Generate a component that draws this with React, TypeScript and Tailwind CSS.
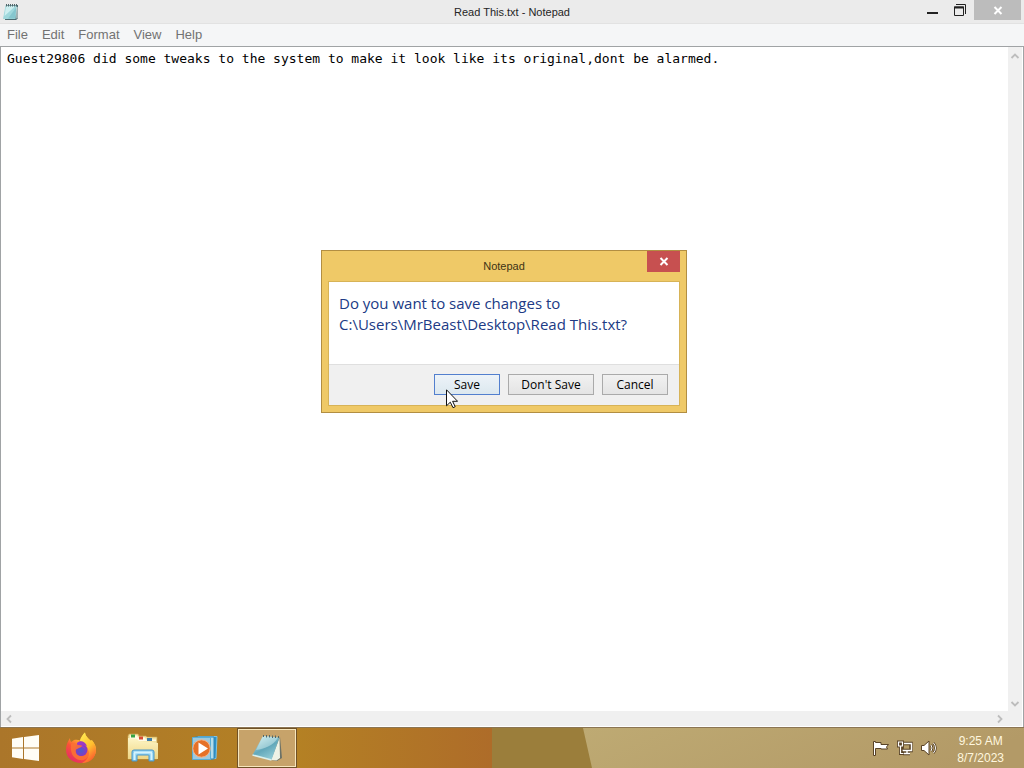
import type { ReactNode } from 'react';

const menus = ['File', 'Edit', 'Format', 'View', 'Help'];

function NotepadIcon() {
  return (
    <svg className="h-[18px] w-[18px]" viewBox="0 0 18 18" aria-hidden="true">
      <path d="M4 2h12v13.500l-2 1.500H3z" fill="#4b6a70" />
      <path d="M3.500 2.500H15l-1.500 13.500H1z" fill="#9fd8dc" />
      <path d="M4 3h9.500L2.500 13z" fill="#cdeff0" />
      <path d="M14.500 4L13 15.500H6z" fill="#74bac4" opacity=".6" />
      <path d="M4.500 1v2.500M6.500 1v2.500M8.500 1v2.500M10.500 1v2.500M12.500 1v2.500M14.500 1v2.500" stroke="#52676b" />
      <path d="M15 4v11.500" stroke="#f4f7f5" />
    </svg>
  );
}

function Chevron({ d }: { d: string }) {
  return (
    <svg className="h-[10px] w-[10px]" viewBox="0 0 10 10" fill="none" stroke="#bdbdbd" strokeWidth="1.8" aria-hidden="true">
      <path d={d} />
    </svg>
  );
}

function CloseGlyph() {
  return (
    <svg className="h-[9px] w-[10px]" viewBox="0 0 10 9" stroke="#fff" strokeWidth="2" aria-hidden="true">
      <path d="M1.500 1l7 7M8.500 1l-7 7" />
    </svg>
  );
}

function WindowsLogo() {
  return (
    <svg className="h-[26px] w-[27px]" viewBox="0 0 27 26" fill="#fffdf5" aria-hidden="true">
      <path d="M0 3.700l11-1.600v10.400H0zM12 1.900L27 0v12.500H12zM0 13.500h11v10.400L0 22.300zM12 13.500h15V26l-15-1.900z" />
    </svg>
  );
}

function Firefox() {
  return (
    <svg className="h-8 w-8" viewBox="0 0 32 32" aria-hidden="true">
      <defs>
        <linearGradient id="fox" x1=".85" y1=".05" x2=".2" y2=".95">
          <stop offset="0" stopColor="#ffec4f" />
          <stop offset=".35" stopColor="#ffb02b" />
          <stop offset=".65" stopColor="#fb5236" />
          <stop offset="1" stopColor="#e62c66" />
        </linearGradient>
        <linearGradient id="flame" x2=".5" y2="1">
          <stop offset="0" stopColor="#fff057" />
          <stop offset=".6" stopColor="#ffbe2e" />
          <stop offset="1" stopColor="#fb652e" />
        </linearGradient>
        <radialGradient id="globe" cx=".5" cy=".55">
          <stop offset="0" stopColor="#4b5bd0" />
          <stop offset="1" stopColor="#8e36bf" />
        </radialGradient>
      </defs>
      <path d="M5 6c0 2 .5 3 1.200 4L9 8c2-.5 4-.5 6 .5 1-3.500 3-6 5-8 .5 4 3.500 6 6 8.500l.8-1c3 3.500 4.500 7 4.200 10.500-.7 8-7 12.500-15 12.500S1.200 26 1 18C.9 13 3 9 5 6z" fill="url(#fox)" />
      <path d="M20 .5c.5 4 3.500 6 6 8.500l.8-1c3 3.500 4.500 7 4.200 10.500C30.400 26 25 31 17 31c6-3 8-8 6-14-1-3-3-5-8-8.500 1-3.500 3-6 5-8z" fill="url(#flame)" />
      <circle cx="16" cy="18" r="6.500" fill="url(#globe)" />
      <path d="M12 11c3-3 8-2 10 3-2-.7-3.500-.5-4 0 1.500 1 2 2 2 3-2-2-5-2-8-4z" fill="#9b38c4" />
      <path d="M6 12c3-2 5-1 7 1l4 .5c0 1.500-2 2-3 2.500l-3 1.500c-1 4 2 7 6 6.500 4-.5 6-3 6-6 3 6-2 11-8 10-7-1-10-7-9-16z" fill="#fb7134" opacity=".9" />
    </svg>
  );
}

function Explorer() {
  return (
    <svg className="h-[30px] w-[32px]" viewBox="0 0 32 30" aria-hidden="true">
      <defs>
        <linearGradient id="folder" x2="0" y2="1">
          <stop offset="0" stopColor="#fdf5c6" />
          <stop offset="1" stopColor="#efd684" />
        </linearGradient>
      </defs>
      <path d="M1 26V3l1-2h9l1 2h7l1 1h10v22z" fill="#f3e3a2" stroke="#c7a451" strokeWidth=".7" />
      <path d="M3 2.500h7l1 2h7l1 2h10V8H3z" fill="#fffbe6" />
      <path d="M4 1.500h4v3H4z" fill="#35a344" />
      <path d="M12 3.500h4v3h-4z" fill="#d84b34" />
      <path d="M20 5h5v3h-5z" fill="#3f7da8" />
      <path d="M1 5l9 1 2 2 7 .5L31 10v16H1z" fill="url(#folder)" />
      <path d="M5 28V19q0-2 2-2h18q2 0 2 2v9h-5v-5.500q0-.5-1-.5H11q-1 0-1 .5V28z" fill="#8bcff1" stroke="#4a96c7" />
      <path d="M7 19.500h18M7.500 20v7M24.500 20v7" stroke="#d5f3fd" strokeWidth="1.800" />
    </svg>
  );
}

function MediaPlayer() {
  return (
    <svg className="h-[27px] w-[27px]" viewBox="0 0 27 27" aria-hidden="true">
      <path d="M7 1.500h19l-1 22-18 1z" fill="#2e91c7" stroke="#7fc4e3" />
      <path d="M4 2h19v22H4z" fill="#b3ddec" stroke="#2e86b8" />
      <path d="M1.500 2.500h18v22h-18z" fill="#9dc9df" stroke="#58add6" />
      <circle cx="10.500" cy="13.500" r="8.700" fill="#e57128" stroke="#f6b78c" />
      <path d="M7.500 7.500l9.500 6-9.500 6z" fill="#fff" />
    </svg>
  );
}

function NotepadLarge() {
  return (
    <svg className="h-[30px] w-[32px]" viewBox="0 0 32 30" aria-hidden="true">
      <defs>
        <linearGradient id="page" x1=".2" y1="0" x2=".8" y2="1">
          <stop offset="0" stopColor="#c6e9ec" />
          <stop offset=".5" stopColor="#62a8ba" />
          <stop offset="1" stopColor="#9bd3dc" />
        </linearGradient>
      </defs>
      <path d="M29 4l2 21-5 3-6-1z" fill="#6c7267" />
      <path d="M28.500 5l.5 20-3.500 2.500L20 27z" fill="#eef3e6" />
      <path d="M12 3l16.500 1.500L20.500 27 1.500 22z" fill="url(#page)" />
      <path d="M12 3l15 1.500C22 13 13 16 5 17z" fill="#dcf3f3" opacity=".45" />
      <path d="M1.500 22l19 5" stroke="#daf0ec" strokeWidth="1.500" />
      <path d="M12.500 2v2M15.500 2v2.500M18.500 2v2.500M21.500 2.500v2.500M24.500 2.500v2.500M27.500 3v2" stroke="#526769" />
    </svg>
  );
}

function TrayIcons() {
  const outline = '#594326';
  return (
    <>
      <button aria-label="Action Center">
        <svg className="h-4 w-4" viewBox="0 0 16 16" aria-hidden="true">
          <path d="M.5 1.500h2v1H8v2h7.500L13.500 7l1 2H8V8.500H2.500v7h-2z" fill="#fff" stroke={outline} />
        </svg>
      </button>
      <button aria-label="Network">
        <svg className="h-4 w-4" viewBox="0 0 16 16" aria-hidden="true">
          <path d="M5 3.500h9v7H5zM9.500 10v3M6 13.500h7" fill="none" stroke={outline} strokeWidth="3.500" />
          <path d="M6 3.500h8.500v7H5.500M10 10.500v3M7 13.500h6" fill="none" stroke="#fff" strokeWidth="1.400" />
          <path d="M1.500 2h4v4h-4zM3.500 6v7.500h3" fill="none" stroke={outline} strokeWidth="3" />
          <path d="M1.500 2h4v4h-4zM3.500 6v7.500h3" fill={outline} stroke="#fff" strokeWidth="1.200" />
        </svg>
      </button>
      <button aria-label="Volume">
        <svg className="h-4 w-4" viewBox="0 0 16 16" aria-hidden="true">
          <path d="M.5 5.500H3L8 1v14l-5-4.500H.5z" fill="#fff" stroke={outline} />
          <path d="M10 5q2 3 0 6M12.500 3q4 5 0 10" fill="none" stroke={outline} strokeWidth="2.500" />
          <path d="M10 5q2 3 0 6M12.500 3q4 5 0 10" fill="none" stroke="#fff" />
        </svg>
      </button>
    </>
  );
}

function TitleBar() {
  return (
    <header className="grid h-[23px] shrink-0 grid-cols-[1fr_auto_1fr] bg-[#ebebeb] text-[#252525]">
      <div className="pt-[3px] pl-[2px]"><NotepadIcon /></div>
      <h1 className="pt-px text-[11px] leading-[23px]">Read This.txt - Notepad</h1>
      <div className="flex justify-end">
        <button aria-label="Minimize" className="flex h-5 w-7 items-center justify-center">
          <svg className="h-4 w-[11px]" viewBox="0 0 11 16" aria-hidden="true"><path d="M0 10h11v2H0z" fill="#222" /></svg>
        </button>
        <button aria-label="Restore" className="flex h-5 w-7 items-center justify-center">
          <svg className="h-3 w-3" viewBox="0 0 12 12" fill="none" stroke="#222" aria-hidden="true">
            <path d="M.5 3h9v8.500h-9z" />
            <path d="M0 3.500h10" strokeWidth="2" />
            <path d="M2 .5h9.500V10" />
          </svg>
        </button>
        <button aria-label="Close" className="mr-[3px] flex h-5 w-[47px] items-center justify-center bg-[#bcbcbc]"><CloseGlyph /></button>
      </div>
    </header>
  );
}

function ActionButton({ children, primary, wide }: { children: ReactNode; primary?: boolean; wide?: boolean }) {
  return (
    <button
      className={`h-[21px] border bg-linear-to-b text-[12px] leading-[19px] text-black ${wide ? 'w-[86px]' : 'w-[66px]'} ${
        primary ? 'border-[#527fce] from-[#edf3f8] to-[#dce8ef]' : 'border-[#aaa] from-[#f1f1f1] to-[#e4e4e4]'
      }`}
    >
      {children}
    </button>
  );
}

function SaveDialog() {
  return (
    <section role="dialog" aria-labelledby="dialog-title" className="absolute top-[250px] left-[321px] w-[366px] border border-[#b28e42] bg-[#efc967] px-[6px] pb-[6px]">
      <div className="grid h-[30px] grid-cols-[1fr_auto_1fr]">
        <h2 id="dialog-title" className="col-start-2 text-[11px] leading-[30px] text-[#403316]">Notepad</h2>
        <button aria-label="Close dialog" className="flex h-[21px] w-[33px] items-center justify-center justify-self-end bg-[#c75050]"><CloseGlyph /></button>
      </div>
      <div className="border border-[#d7b357] bg-[#f0f0f0] font-['Open_Sans','Noto_Sans',sans-serif]">
        <p className="h-[83px] border-b border-[#dfdfdf] bg-white px-[10px] pt-[11px] text-[15px] leading-[21px] text-[#203a85]">
          Do you want to save changes to<br />C:\Users\MrBeast\Desktop\Read This.txt?
        </p>
        <div className="flex justify-end gap-2 px-[11px] pt-[9px] pb-[10px]">
          <ActionButton primary>Save</ActionButton>
          <ActionButton wide>Don't Save</ActionButton>
          <ActionButton>Cancel</ActionButton>
        </div>
      </div>
    </section>
  );
}

function Taskbar() {
  return (
    <footer className="relative flex h-[41px] shrink-0 items-stretch overflow-hidden border-t border-[#8b7553] bg-[#b47f25]">
      <svg className="absolute inset-0 h-full w-full" viewBox="0 0 1024 40" preserveAspectRatio="none" aria-hidden="true">
        <defs>
          <linearGradient id="wall"><stop offset="0" stopColor="#ab762a" /><stop offset=".6" stopColor="#b48124" /><stop offset="1" stopColor="#ae6c29" /></linearGradient>
          <linearGradient id="sand" x2="1" y2=".2"><stop offset="0" stopColor="#beaa73" /><stop offset="1" stopColor="#b39a67" /></linearGradient>
        </defs>
        <path d="M0 0h492v40H0z" fill="url(#wall)" />
        <path d="M492 0h92l9 40H492z" fill="#9b7e3b" />
        <path d="M583 0h441v40H592z" fill="url(#sand)" />
      </svg>
      <nav aria-label="Taskbar" className="relative flex">
        <button aria-label="Start" className="flex w-[50px] items-center justify-center"><WindowsLogo /></button>
        <button aria-label="Firefox" className="flex w-[62px] items-center justify-center"><Firefox /></button>
        <button aria-label="File Explorer" className="flex w-[62px] items-center justify-center"><Explorer /></button>
        <button aria-label="Media Player" className="mr-[2px] flex w-[61px] items-center justify-center"><MediaPlayer /></button>
        <button aria-label="Notepad" className="flex w-[60px] items-center justify-center border border-[#705126] bg-[#c7a36a] outline outline-offset-[-2px] outline-[#f7e7bd]"><NotepadLarge /></button>
      </nav>
      <div className="relative ml-auto flex items-center gap-2 pr-5">
        <TrayIcons />
        <time dateTime="2023-08-07T09:25" className="ml-3 pt-1 text-center text-[12px] leading-[17px] text-[#fff7df]">
          <span className="block">9:25 AM</span><span className="block">8/7/2023</span>
        </time>
      </div>
    </footer>
  );
}

export default function App() {
  return (
    <div className="relative flex h-screen flex-col overflow-hidden bg-white font-['Liberation_Sans',Arial,sans-serif]">
      <TitleBar />
      <nav aria-label="Menu" className="flex h-[23px] shrink-0 gap-[14px] border-t border-[#e2e2e2] bg-[#f5f6f7] px-[7px] text-[13px] leading-[22px] text-[#727272]">
        {menus.map((name) => <button key={name}>{name}</button>)}
      </nav>
      <main className="grid min-h-0 flex-1 grid-cols-[1fr_14px] grid-rows-[1fr_15px] border-t border-r border-l border-[#a0a3a5] pr-px pb-px">
        <textarea
          aria-label="Document"
          wrap="off"
          spellCheck={false}
          className="resize-none overflow-hidden bg-white px-[6px] pt-[3px] font-['DejaVu_Sans_Mono','Liberation_Mono',monospace] text-[13px] leading-[17px] text-black outline-none"
          defaultValue="Guest29806 did some tweaks to the system to make it look like its original,dont be alarmed."
        />
        <div className="flex flex-col items-center justify-between bg-[#f0f0f0] pt-1 pb-[2px]">
          <button aria-label="Scroll up"><Chevron d="M1.500 7L5 3.500 8.500 7" /></button>
          <button aria-label="Scroll down"><Chevron d="M1.500 3L5 6.500 8.500 3" /></button>
        </div>
        <div className="flex items-center justify-between bg-[#f0f0f0] px-[3px]">
          <button aria-label="Scroll left"><Chevron d="M7 1.500L3.500 5 7 8.500" /></button>
          <button aria-label="Scroll right"><Chevron d="M3 1.500L6.500 5 3 8.500" /></button>
        </div>
        <div className="bg-[#f0f0f0]" />
      </main>
      <Taskbar />
      <SaveDialog />
      <svg className="pointer-events-none absolute top-[389px] left-[446px] h-5 w-3" viewBox="0 0 12 20" aria-hidden="true">
        <path d="M.5.8v16l3.800-3.600 2.700 5.500 2.200-1-2.600-5.400h5z" fill="#fff" stroke="#111" />
      </svg>
    </div>
  );
}
